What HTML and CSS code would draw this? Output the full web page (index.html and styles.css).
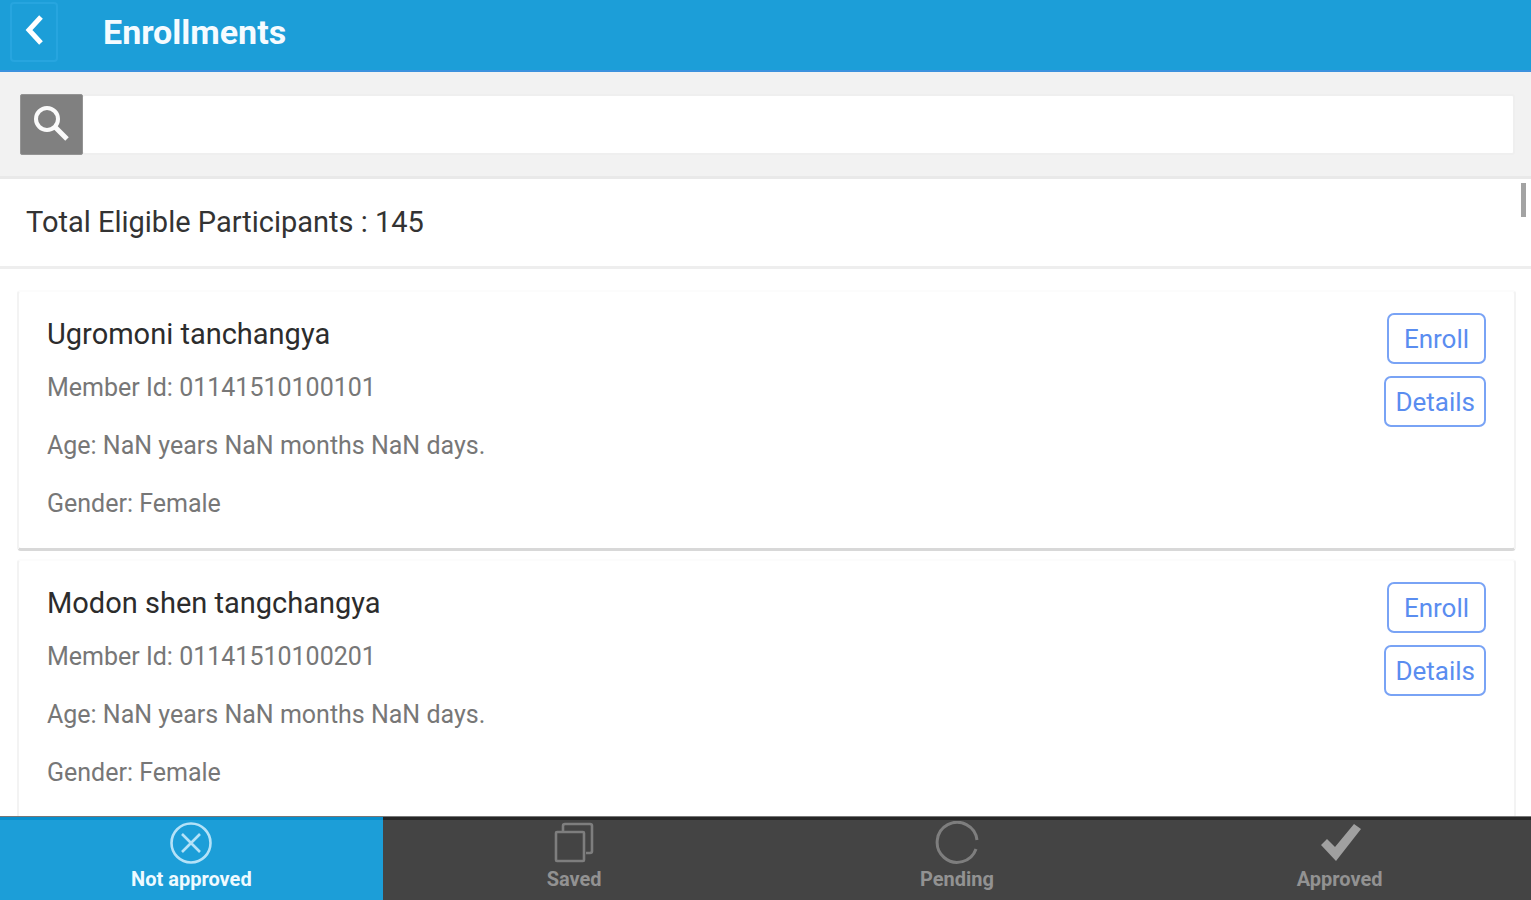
FILE: index.html
```html
<!DOCTYPE html>
<html lang="en">
<head>
<meta charset="utf-8">
<meta name="viewport" content="width=device-width, initial-scale=1">
<title>Enrollments</title>
<link rel="stylesheet" href="styles.css">
</head>
<body>
<div class="app">
  <header class="topbar">
    <button class="back" type="button" aria-label="Back">
      <svg width="20" height="30" viewBox="0 0 20 30" fill="none" stroke="#fff" stroke-width="5"><path d="M17 2 5 15l12 13"/></svg>
    </button>
    <h1 class="title">Enrollments</h1>
  </header>
  <form class="search" role="search">
    <button class="search-button" type="button" aria-label="Search">
      <svg width="38" height="38" viewBox="0 0 38 38" fill="none" stroke="#fafafa"><circle cx="14" cy="13" r="11" stroke-width="4"/><path d="m21 20 13 13" stroke-width="5"/></svg>
    </button>
    <input class="search-input" type="text" aria-label="Search participants">
  </form>
  <main class="content">
    <div class="scroll-thumb"></div>
    <h2 class="total">Total Eligible Participants : 145</h2>
    <ul class="cards">
      <li class="card">
        <div class="info">
          <h3 class="name">Ugromoni tanchangya</h3>
          <p class="line">Member Id: 01141510100101</p>
          <p class="line">Age: NaN years NaN months NaN days.</p>
          <p class="line">Gender: Female</p>
        </div>
        <div class="actions">
          <button class="action" type="button">Enroll</button>
          <button class="action" type="button">Details</button>
        </div>
      </li>
      <li class="card">
        <div class="info">
          <h3 class="name">Modon shen tangchangya</h3>
          <p class="line">Member Id: 01141510100201</p>
          <p class="line">Age: NaN years NaN months NaN days.</p>
          <p class="line">Gender: Female</p>
        </div>
        <div class="actions">
          <button class="action" type="button">Enroll</button>
          <button class="action" type="button">Details</button>
        </div>
      </li>
    </ul>
  </main>
  <nav class="tabs">
    <a class="tab tab-active" href="#not-approved" aria-current="page">
      <svg width="44" height="44" viewBox="0 0 44 44" fill="none" stroke="#b4e2f8" stroke-width="2.6"><circle cx="22" cy="22" r="19.5"/><path d="m13 13 18 18M31 13 13 31"/></svg>
      <span>Not approved</span>
    </a>
    <a class="tab" href="#saved">
      <svg width="44" height="44" viewBox="0 0 44 44" fill="none" stroke="#7e7e7e" stroke-width="2.6"><rect x="4" y="11" width="28" height="29" rx="1"/><path d="M11 11V5q0-2 2-2h25q2 0 2 2v25q0 2-2 2h-4"/></svg>
      <span>Saved</span>
    </a>
    <a class="tab" href="#pending">
      <svg width="44" height="44" viewBox="0 0 44 44" fill="none" stroke="#7e7e7e" stroke-width="3"><path d="M42 19A20 20 0 1 0 41 28"/></svg>
      <span>Pending</span>
    </a>
    <a class="tab" href="#approved">
      <svg width="44" height="44" viewBox="0 0 44 44" fill="#a0a0a0"><path d="m3 24 6-6 8 8L36 3l7 5-25 32z"/></svg>
      <span>Approved</span>
    </a>
  </nav>
</div>
</body>
</html>
```
FILE: styles.css
```css
* { box-sizing: border-box; }
body { margin: 0; font-family: Roboto, "Liberation Sans", sans-serif; background: #fff; color: #333; }
h1, h2, h3, p, ul { margin: 0; padding: 0; font-weight: 400; }
button, input { font-family: inherit; margin: 0; }
svg { display: block; }
.app { display: flex; flex-direction: column; height: 100vh; overflow: hidden; }
.topbar { display: flex; align-items: flex-start; gap: 45px; padding: 2px 10px 8px; background: #1c9ed8; border-bottom: 2px solid #3c92de; }
.back { display: flex; align-items: center; justify-content: center; width: 48px; height: 60px; padding: 0 0 4px; background: none; border: 2px solid #27a5df; border-radius: 4px; }
.title { font-size: 34px; line-height: 60px; font-weight: 700; color: #f5fbff; }
.search { display: flex; padding: 22px 16px 21px 20px; background: #f2f2f2; border-bottom: 3px solid #e9e9e9; }
.search-button { display: flex; align-items: center; justify-content: center; width: 63px; padding: 0; background: #808080; border: 1px solid #949494; border-radius: 2px; }
.search-input { flex: 1; min-width: 0; height: 61px; padding: 0 12px; font-size: 28px; background: #fff; border: 2px solid #efefef; border-left: 0; border-radius: 3px; }
.content { position: relative; flex: 1; min-height: 0; overflow: hidden; }
.scroll-thumb { position: absolute; top: 4px; right: 5px; width: 5px; height: 34px; background: #a3a3a3; }
.total { padding: 23px 26px 24px; font-size: 29px; line-height: 40px; border-bottom: 3px solid #eee; }
.cards { display: flex; flex-direction: column; gap: 8px; padding: 21px 15px 21px 17px; list-style: none; }
.card { display: flex; justify-content: space-between; padding: 21px 28px 15px; border: 2px solid #f3f3f3; border-top-color: #fcfcfc; border-bottom: 3px solid #d8d8d8; border-radius: 4px; }
.name { margin-bottom: 4px; font-size: 29px; line-height: 42px; color: #2c2c2c; }
.line { font-size: 25px; line-height: 58px; color: #777; }
.actions { display: flex; flex-direction: column; align-items: flex-end; gap: 12px; }
.action { padding: 0 9px; min-width: 99px; height: 51px; font-size: 26px; color: #5a8df0; background: #fff; border: 2px solid #79a3f5; border-radius: 7px; }
.tabs { display: grid; grid-template-columns: repeat(4, 1fr); background: #444; border-top: 1px solid #777; }
.tab { display: flex; flex-direction: column; align-items: center; padding: 1px 0 7px; font-size: 20px; line-height: 28px; font-weight: 700; color: #929292; text-decoration: none; border-top: 3px solid #262626; }
.tab-active { color: #eefaff; background: #1c9ed8; border-top-color: #078fcd; }
```
